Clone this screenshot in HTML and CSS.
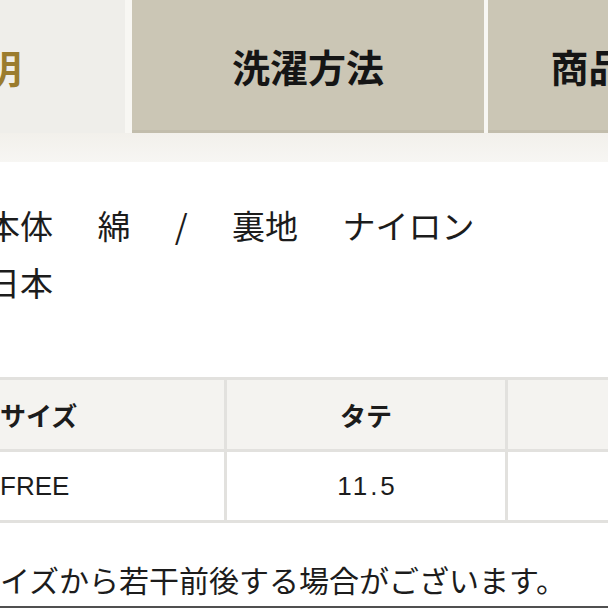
FILE: index.html
```html
<!DOCTYPE html>
<html lang="ja">
<head>
<meta charset="utf-8">
<link rel="stylesheet" href="styles.css">
</head>
<body>
<div class="tabs">
  <div class="tab tab-active">商品説明</div>
  <div class="tab">洗濯方法</div>
  <div class="tab">商品について</div>
</div>
<div class="band"></div>
<div class="content">
  <div class="spec">
    <p class="spaced">本体 綿 / 裏地 ナイロン</p>
    <p>日本</p>
  </div>
  <table class="size-table">
    <colgroup><col class="c1"><col class="c2"><col class="c3"></colgroup>
    <thead>
      <tr><th class="first">サイズ</th><th>タテ</th><th>ヨコ</th></tr>
    </thead>
    <tbody>
      <tr><td class="first">FREE</td><td class="num">11.5</td><td class="num">15</td></tr>
    </tbody>
  </table>
  <p class="note">サイズから若干前後する場合がございます。</p>
  <div class="rule"></div>
</div>
</body>
</html>
```
FILE: styles.css
```css
html, body {
  margin: 0;
  padding: 0;
  overflow: hidden;
  background: #ffffff;
}

body {
  width: 608px;
  font-family: "Noto Sans CJK JP", sans-serif;
  color: #1c1c1c;
}

.tabs {
  display: flex;
  gap: 4px;
  width: max-content;
  height: 133px;
  margin-left: -224px;
  background: #f8f7f3;
}

.tab {
  flex: none;
  box-sizing: border-box;
  width: 352px;
  display: flex;
  align-items: center;
  justify-content: center;
  background: #cbc6b5;
  border-bottom: 3px solid #c2bdac;
  font-size: 38px;
  font-weight: 700;
  color: #151515;
}

.tab-active {
  width: 349px;
  margin-right: 3px;
  padding-right: 10px;
  background: #efeeea;
  border-bottom: 0;
  color: #9b7c2e;
}

.band {
  height: 29px;
  background: linear-gradient(#f2f0eb, #f7f6f3);
}

.content {
  padding-top: 35px;
}

.spec {
  margin-left: -13px;
  font-size: 33px;
  line-height: 57px;
}

.spec p {
  margin: 0;
  white-space: nowrap;
}

.spaced {
  word-spacing: 37px;
}

.size-table {
  margin: 66px 0 0 -20px;
  border-collapse: separate;
  border-spacing: 0;
  table-layout: fixed;
  width: 809px;
  border-top: 3px solid #e2e1de;
  border-left: 3px solid #e2e1de;
  font-family: "Liberation Sans", "Noto Sans CJK JP", sans-serif;
  font-size: 26px;
}

.c1 { width: 244px; }
.c2 { width: 281px; }
.c3 { width: 281px; }

.size-table th,
.size-table td {
  padding: 0;
  border-right: 3px solid #e2e1de;
  border-bottom: 3px solid #e2e1de;
  text-align: center;
  color: #1c1c1c;
}

.size-table th {
  height: 69px;
  background: #f4f3f0;
  font-weight: 700;
}

.size-table td {
  height: 68px;
  background: #ffffff;
  font-weight: 400;
}

.size-table .num {
  letter-spacing: 3px;
  text-indent: 3px;
}

.size-table .first {
  text-align: left;
  padding-left: 17px;
}

.note {
  margin: 34px 0 0 -30px;
  font-size: 30px;
  line-height: 44px;
  white-space: nowrap;
}

.rule {
  margin-top: 5px;
  height: 2px;
  background: #505050;
}
```
